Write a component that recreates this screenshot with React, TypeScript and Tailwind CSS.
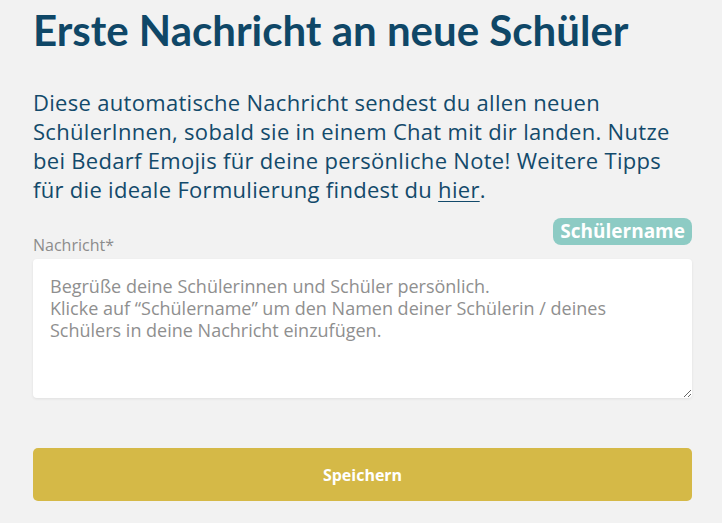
import React from "react";

export default function App() {
  return (
    <div className="min-h-screen bg-[#f2f2f2] pl-[33px] pr-[30px] pt-[4px] font-['Open_Sans',sans-serif]">
      <h1 className="font-['Lato',sans-serif] text-[42px] leading-[52px] font-bold text-[#0f4767]">
        Erste Nachricht an neue Schüler
      </h1>
      <p className="mt-[32px] text-[22px] leading-[29px] tracking-[0.3px] text-[#134a6b]">
        Diese automatische Nachricht sendest du allen neuen SchülerInnen, sobald sie in einem Chat mit dir landen. Nutze bei Bedarf Emojis für deine persönliche Note! Weitere Tipps für die ideale Formulierung findest du{" "}
        <a className="underline underline-offset-[3px] decoration-1" href="#">hier</a>.
      </p>
      <div className="mt-[14px] flex items-end justify-between">
        <label className="text-[16px] leading-[20px] text-[#8c8c8c]">Nachricht*</label>
        <span className="mb-[10px] rounded-[8px] bg-[#8dcbc4] px-[7px] h-[27px] flex items-center text-[19px] font-bold text-white">
          Schülername
        </span>
      </div>
      <textarea
        className="mt-[4px] block w-full h-[139px] rounded-[4px] bg-white px-[17px] py-[16px] text-[18px] leading-[22px] text-[#555] placeholder:text-[#8f8f8f] shadow-[0_1px_3px_rgba(0,0,0,0.08)] outline-none"
        placeholder={"Begrüße deine Schülerinnen und Schüler persönlich.\nKlicke auf “Schülername” um den Namen deiner Schülerin / deines Schülers in deine Nachricht einzufügen."}
      />
      <button className="mt-[50px] block w-full h-[53px] rounded-[5px] bg-[#d5b947] text-[16px] font-bold text-white">
        Speichern
      </button>
    </div>
  );
}
